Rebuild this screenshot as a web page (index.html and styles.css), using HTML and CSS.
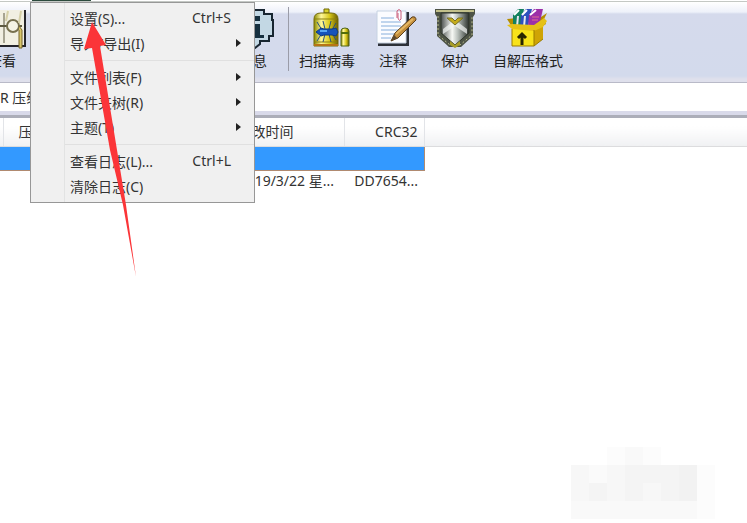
FILE: index.html
```html
<!DOCTYPE html>
<html lang="zh-CN">
<head>
  <meta charset="UTF-8">
  <meta name="viewport" content="width=device-width, initial-scale=1.0">
  <title>WinRAR</title>
  <link rel="stylesheet" href="styles.css">
</head>
<body>
  <div class="menubar"><span class="menubar-open"></span></div>
  <nav class="toolbar">
    <div class="toolbar-left">
      <button class="tool view-tool" type="button">
        <svg class="tool-icon" viewBox="0 0 48 44">
          <path d="M2 3h45v36H2z" fill="#f1efe2"/>
          <path d="M47 3v36H2" fill="none" stroke="#25252b" stroke-width="2"/>
          <path d="M26 6v30" stroke="#5c5840"/>
          <path d="M22 19h22" stroke="#5c5840" stroke-width="2"/>
          <circle cx="35" cy="19" r="6" fill="#f5f3e4" stroke="#77704e" stroke-width="2"/>
          <path d="M41 19l3 4v18h-3V23" fill="#d9c66a" stroke="#77652a"/>
          <path d="M43 4l-2 12M30 4l-2 10" stroke="#d6d0a8" stroke-width="2"/>
        </svg>
        <span>查看</span>
      </button>
      <button class="tool" type="button">
        <svg class="tool-icon" viewBox="0 0 48 44">
          <path d="M7 3h28v4h8v6h1v16h-4v5h-9v3l-5 4h-3l-3-4v-3H7z" fill="#c3d8e4" stroke="#182631" stroke-width="2"/>
          <path d="M25 9h6v5h-6zM23 17h8v11h4v3H22v-3h4v-8h-3z" fill="#16303f"/>
        </svg>
        <span>信息</span>
      </button>
    </div>
    <span class="tool-divider"></span>
    <div class="toolbar-right">
      <button class="tool" type="button">
        <svg class="tool-icon" viewBox="0 0 48 44">
          <defs>
            <linearGradient id="gold">
              <stop offset="0" stop-color="#8a8a00"/>
              <stop offset=".3" stop-color="#fff79a"/>
              <stop offset=".65" stop-color="#d8c818"/>
              <stop offset="1" stop-color="#6b5d00"/>
            </linearGradient>
          </defs>
          <path d="M21 2h5v4h-5z" fill="#d7cf2b" stroke="#6e6905"/>
          <path d="M11 12q0-6 7-6h10q7 0 7 6v27H11z" fill="url(#gold)" stroke="#746b08"/>
          <path d="M12 12h22M12 35h22" stroke="#8c8110"/>
          <path d="M11 38h24" stroke="#b77416" stroke-width="2"/>
          <path d="M38 24q0-3 4-3t4 3v15h-8z" fill="url(#gold)" stroke="#4e6416"/>
          <path d="M38 26h8" stroke="#526d08" stroke-width="2"/>
          <path d="M14 15l5 8M20 14l2 8M28 14l-2 8M33 16l-4 7M14 34l5-8M20 35l2-8M28 35l-2-8M33 33l-4-7" stroke="#244f83" fill="none"/>
          <path d="M13 25l5-4 3 1h8l4-1 2 4-2 4-4-1h-8l-3 1z" fill="#1553bb" stroke="#103b7e"/>
          <path d="M17 24h7" stroke="#58a7f3" stroke-width="2"/>
        </svg>
        <span>扫描病毒</span>
      </button>
      <button class="tool" type="button">
        <svg class="tool-icon" viewBox="0 0 48 44">
          <path d="M9 5h31v34H9z" fill="#2c3038"/>
          <path d="M8 4h29v32H8z" fill="#fbfcff" stroke="#c6d2e2"/>
          <path d="M12 11h13M12 15h20M12 19h20M12 23h18M12 27h14M12 31h10" stroke="#86aedb"/>
          <path d="M28 11V4q2-3 4 0v8q-2 3-3-1V6" fill="none" stroke="#c95a78"/>
          <path d="M22 34l4-8 17-16q4-1 4 3L29 31z" fill="#c28d3b" stroke="#583d1c"/>
          <path d="M27 27l17-15" stroke="#e4b662" stroke-width="2"/>
          <path d="M22 34l3-6 3 3z" fill="#5d492d"/>
        </svg>
        <span>注释</span>
      </button>
      <button class="tool" type="button">
        <svg class="tool-icon" viewBox="0 0 48 44">
          <defs>
            <linearGradient id="steel">
              <stop offset="0" stop-color="#4b504e"/>
              <stop offset=".4" stop-color="#f7f9f5"/>
              <stop offset=".6" stop-color="#b9c0bb"/>
              <stop offset="1" stop-color="#2c322d"/>
            </linearGradient>
          </defs>
          <path d="M4 2h40v5l-2 3v19L30 40H18L6 29V10L4 7z" fill="#4d5346"/>
          <path d="M7 9v19l12 10h10l12-10V9" fill="none" stroke="#b9bb8c" stroke-dasharray="2 2"/>
          <path d="M10 6h28v20L24 38 10 26z" fill="url(#steel)" stroke="#2e3429"/>
          <path d="M12 22l12-9 12 9v5l-12-8-12 8z" fill="#f4f6f5" opacity=".7"/>
          <path d="M5 4h38" stroke="#c2c08a" stroke-width="2"/>
          <path d="M16 11h5l3 3 3-3h5l-8 7z" fill="#c5ac1c" stroke="#777126"/>
          <path d="M19 34l5 4 5-4v4l-5 3-5-3z" fill="#a99d28"/>
        </svg>
        <span>保护</span>
      </button>
      <button class="tool" type="button">
        <svg class="tool-icon" viewBox="0 0 48 44">
          <path d="M3 12l9-1v10l-4-1zM34 12l9-6-3 6 2 5-8 5z" fill="#b38c00"/>
          <path d="M9 8l5-6h6l-3 17H9z" fill="#13815e"/>
          <path d="M17 8l5-6h6l-4 17h-8z" fill="#2d50bd"/>
          <path d="M25 8l5-6h9l-4 17H24z" fill="#9c2fa8"/>
          <path d="M10 8l5-5M18 8l5-5M26 8l6-5" stroke="#fff" stroke-width="2"/>
          <path d="M14 9l-1 11M21 9l-1 11" stroke="#e6e6f0" stroke-width="2"/>
          <path d="M28 10h7M28 13h6" stroke="#e26a92"/>
          <path d="M8 21h22v18H8z" fill="#f8e21a"/>
          <path d="M30 21l9-6v17l-9 7z" fill="#cfa405"/>
          <path d="M8 22l-5-4 5-1 22 1 10-7 3 3-4 6-9 4z" fill="#e5c116"/>
          <path d="M8 22v17h22V23M30 39l9-7" fill="none" stroke="#9b7c00"/>
          <path d="M18 38V27M14 31l4-4 4 4" fill="none" stroke="#292500" stroke-width="3"/>
        </svg>
        <span>自解压格式</span>
      </button>
    </div>
  </nav>

  <div class="address">
    <input class="address-input" type="text" aria-label="路径" value="R 压缩文件">
  </div>

  <table class="files">
    <colgroup>
      <col class="col-size">
      <col class="col-packed">
      <col class="col-type">
      <col class="col-date">
      <col class="col-crc">
      <col>
    </colgroup>
    <thead>
      <tr>
        <th></th>
        <th class="packed">压缩后</th>
        <th></th>
        <th>修改时间</th>
        <th class="right">CRC32</th>
        <th class="rest"></th>
      </tr>
    </thead>
    <tbody>
      <tr class="selected">
        <td colspan="5"></td>
        <td class="rest"></td>
      </tr>
      <tr>
        <td></td>
        <td></td>
        <td></td>
        <td class="right date">2019/3/22 星...</td>
        <td class="right crc">DD7654...</td>
        <td class="rest"></td>
      </tr>
    </tbody>
  </table>

  <div class="menu">
    <button class="menu-item" type="button">设置(S)...<span class="shortcut">Ctrl+S</span></button>
    <button class="menu-item submenu" type="button">导入/导出(I)</button>
    <hr class="menu-line">
    <button class="menu-item submenu" type="button">文件列表(F)</button>
    <button class="menu-item submenu" type="button">文件夹树(R)</button>
    <button class="menu-item submenu" type="button">主题(T)</button>
    <hr class="menu-line">
    <button class="menu-item" type="button">查看日志(L)...<span class="shortcut">Ctrl+L</span></button>
    <button class="menu-item" type="button">清除日志(C)</button>
  </div>

  <svg class="pointer" viewBox="0 0 56 258">
    <path d="M11 2L25 25l-6 1 17 104 9 55 10 72-13-72-13-55L11 28l-8 1z" fill="#fb3538"/>
  </svg>

  <svg class="mosaic" viewBox="0 0 144 72" shape-rendering="crispEdges">
    <path d="M36 0h18v18H36zM72 0h18v18H72zM126 18h18v54h-18z" fill="#fcfcfc"/>
    <path d="M54 0h18v18H54zM0 54h126v18H0z" fill="#f9f9f9"/>
    <path d="M0 18h54v36H0zM72 36h18v18H72z" fill="#f7f7f7"/>
    <path d="M18 18h18v18H18z" fill="#fafafa"/>
    <path d="M54 18h54v18H54zM18 36h18v18H18zM54 36h18v18H54zM90 36h18v18H90z" fill="#f4f4f4"/>
    <path d="M108 18h18v36h-18z" fill="#f2f2f2"/>
  </svg>
</body>
</html>
```

FILE: styles.css
```css
* {
  --text-color: #333;
  --menu-color: #f0f0f0;
  --select-color: #3399ff;
  box-sizing: border-box;
}
body {
  position: relative;
  min-height: 100vh;
  margin: 0;
  overflow: hidden;

  background-color: white;
  color: var(--text-color);
  font-family: "Noto Sans", "Noto Sans CJK SC", sans-serif;
  font-size: 14px;
}
button {
  margin: 0;
  padding: 0;
  border: none;
  background: none;
  color: inherit;
  font: inherit;
}

.menubar {
  height: 2px;
  padding-left: 32px;
  border-bottom: 1px solid #c4c8c4;
}
.menubar-open {
  display: block;
  width: 59px;
  height: 1px;
  background-color: #2c4a3c;
}

.toolbar {
  display: flex;
  height: 81px;
  padding-top: 5px;
  border-bottom: 1px solid #b9bac8;
  background: linear-gradient(#fff 0, #eef1fa 10px, #d5daec 12px, #d3daec 74px, #dfe0ec 77px);
}
.toolbar-left {
  display: flex;
  justify-content: space-between;
  width: 277px;
}
.toolbar-right {
  display: flex;
  gap: 14px;
  margin-left: 10px;
}
.view-tool {
  margin-left: -22px;
}
.tool {
  display: flex;
  flex-direction: column;
  align-items: center;
  min-width: 48px;
  height: 66px;

  color: #222;
  line-height: 20px;
  white-space: nowrap;
}
.tool-icon {
  width: 48px;
  height: 44px;
}
.tool-divider {
  width: 1px;
  height: 64px;
  margin-left: 11px;
  background-color: #9a9ca8;
}

.address {
  height: 35px;
  border-bottom: 3px solid #acaeb9;
  background-color: #d9daea;
}
.address-input {
  display: block;
  width: 100%;
  height: 28px;
  padding: 0;
  border: none;
  outline: none;
  background-color: white;
  color: var(--text-color);
  font: inherit;
}

.files {
  width: 100%;
  border-collapse: collapse;
  table-layout: fixed;
  line-height: 20px;
}
.col-size {
  width: 3px;
}
.col-packed {
  width: 87px;
}
.col-type {
  width: 141px;
}
.col-date {
  width: 113px;
}
.col-crc {
  width: 80px;
}
.files th {
  height: 28px;
  padding: 0 6px;
  border-right: 1px solid #e2e4e8;
  border-bottom: 1px solid #dcdcde;
  background: linear-gradient(#fff 30%, #f0f1f3);
  font-weight: normal;
  text-align: left;
  white-space: nowrap;
}
.files .packed {
  padding-left: 15px;
}
.files td {
  height: 24px;
  padding: 0 6px 2px;
  white-space: nowrap;
}
.files th:first-child,
.files td:first-child {
  padding: 0;
}
.files .right {
  text-align: right;
}
.files .date {
  padding-right: 10px;
}
.files .crc {
  padding-left: 0;
}
.files .rest {
  border-right: none;
}
.selected td:first-child {
  border: 1px solid #b08a70;
  border-left: none;
  background-color: var(--select-color);
}

.menu {
  position: absolute;
  top: 2px;
  left: 30px;
  width: 225px;
  padding: 3px 0;

  border: 1px solid #979797;
  background: linear-gradient(90deg, transparent 33px, #e2e3e3 33px, #e2e3e3 34px, transparent 34px) var(--menu-color);
}
.menu-item {
  display: flex;
  justify-content: space-between;
  align-items: center;
  width: 100%;
  height: 25px;
  padding: 0 23px 2px 39px;
  text-align: left;
  white-space: nowrap;
}
.submenu {
  padding-right: 13px;
}
.submenu::after {
  content: "";
  border: 4px solid transparent;
  border-right: none;
  border-left: 5px solid #222;
}
.menu-line {
  height: 1px;
  margin: 4px 0 4px 34px;
  border: none;
  background-color: #e0e0e0;
}

.pointer {
  position: absolute;
  top: 20px;
  left: 81px;
  width: 56px;
  height: 258px;
}

.mosaic {
  position: absolute;
  right: 32px;
  bottom: 4px;
  width: 144px;
  height: 72px;
}
```
